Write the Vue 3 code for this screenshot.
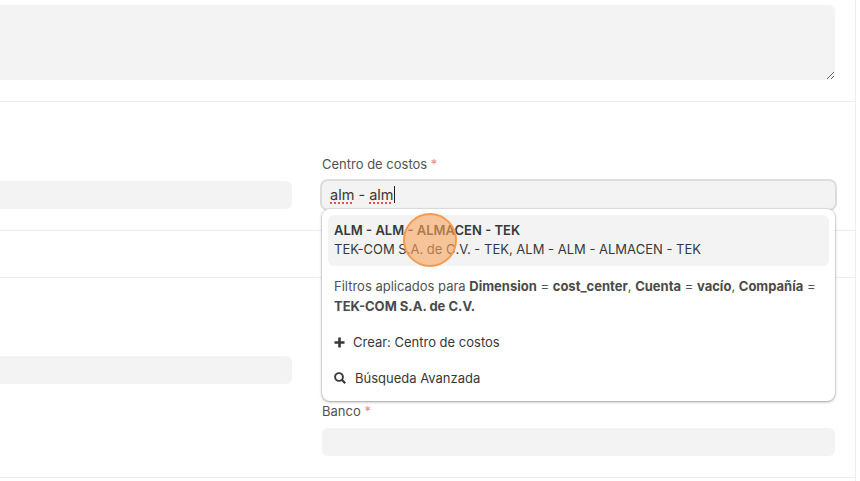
<template>
  <div class="page">
    <section class="sec sec-top">
      <div class="cols">
        <div class="col wide">
          <textarea class="area"></textarea>
        </div>
      </div>
    </section>

    <section class="sec sec-cost">
      <div class="cols">
        <div class="col">
          <div class="box"></div>
        </div>
        <div class="col">
          <label class="lbl">Centro de costos <span class="req">*</span></label>
          <div class="box focus">
            <span class="typed">alm</span> - <span class="typed">alm</span><i class="caret"></i>
          </div>

          <div class="drop">
            <div class="opt">
              <strong>ALM - ALM - ALMACEN - TEK</strong>
              <span>TEK-COM S.A. de C.V. - TEK, ALM - ALM - ALMACEN - TEK</span>
            </div>
            <p class="filters">
              Filtros aplicados para <b>Dimension</b> = <b>cost_center</b>, <b>Cuenta</b> = <b>vacío</b>, <b>Compañía</b> = <b>TEK-COM S.A. de C.V.</b>
            </p>
            <div class="act act-new">
              <svg width="11" height="11" viewBox="0 0 11 11"><path d="M5.5 .5v10M.5 5.5h10" stroke="#383838" stroke-width="2.6" fill="none"/></svg>
              Crear: Centro de costos
            </div>
            <div class="act act-find">
              <svg width="12" height="12" viewBox="0 0 12 12"><circle cx="5" cy="5" r="3.9" stroke="#383838" stroke-width="1.9" fill="none"/><path d="M7.8 7.8l3.4 3.4" stroke="#383838" stroke-width="2.2" fill="none"/></svg>
              Búsqueda Avanzada
            </div>
          </div>
          <div class="pulse"></div>
        </div>
      </div>
    </section>

    <section class="sec sec-empty"></section>

    <section class="sec sec-bank">
      <div class="cols">
        <div class="col">
          <div class="box"></div>
        </div>
        <div class="col">
          <label class="lbl bank-lbl">Banco <span class="req">*</span></label>
          <div class="box"></div>
        </div>
      </div>
    </section>
  </div>
</template>

<script setup>
</script>

<style>
html, body {
  background: #fff;
  overflow: hidden;
}
</style>

<style scoped>
.page {
  width: 856px;
  height: 481px;
  box-sizing: border-box;
  border-right: 1px solid #ededed;
  overflow: hidden;
  font-family: Inter, "Liberation Sans", sans-serif;
  font-size: 13px;
  color: #383838;
}

.sec {
  box-sizing: border-box;
  border-bottom: 1px solid #ededed;
}

.sec-top {
  height: 102px;
  padding-top: 5px;
}

.sec-cost {
  height: 129px;
  padding-top: 79px;
}

.sec-empty {
  height: 47px;
}

.sec-bank {
  height: 200px;
  padding-top: 78px;
}

.cols {
  display: flex;
  justify-content: flex-end;
  gap: 30px;
  padding-right: 20px;
}

.col {
  position: relative;
  flex: none;
  width: 513px;
}

.col.wide {
  width: 1056px;
}

.area {
  display: block;
  box-sizing: border-box;
  width: 100%;
  height: 75px;
  border: none;
  border-radius: 6px;
  background: #f3f3f3;
  margin: 0;
  padding: 0;
  outline: none;
}

.lbl {
  display: block;
  height: 16px;
  margin-top: -25px;
  margin-bottom: 9px;
  line-height: 16px;
  color: #525252;
}

.req {
  color: #e58a8a;
}

.box {
  box-sizing: border-box;
  height: 28px;
  border-radius: 6px;
  background: #f3f3f3;
}

.box.focus {
  padding-left: 8px;
  line-height: 28px;
  font-size: 14.5px;
  color: #383838;
  box-shadow: 0 0 0 2px #dcdcdc;
}

.typed {
  text-decoration: underline dotted #d9534f 2px;
  text-underline-offset: 2px;
}

.caret {
  display: inline-block;
  width: 1px;
  height: 17px;
  background: #222;
  vertical-align: -3px;
}

.bank-lbl {
  margin-top: 47px;
}

.drop {
  position: absolute;
  top: 28px;
  left: 0;
  right: 0;
  height: 192px;
  box-sizing: border-box;
  padding: 6px 6px 0;
  background: #fff;
  border-radius: 8px;
  box-shadow: 0 0 0 1px rgba(0, 0, 0, 0.06), 0 1px 3px rgba(0, 0, 0, 0.35);
  z-index: 2;
}

.opt {
  display: flex;
  flex-direction: column;
  justify-content: center;
  height: 51px;
  padding: 0 6px 2px;
  box-sizing: border-box;
  border-radius: 6px;
  background: #f3f3f3;
  line-height: 19px;
}

.opt strong {
  font-weight: 600;
}

.filters {
  margin: 10px 6px 0;
  line-height: 20px;
  color: #525252;
}

.filters b {
  font-weight: 700;
  color: #4a4a4a;
}

.act {
  display: flex;
  align-items: center;
  padding-left: 6px;
  line-height: 16px;
}

.act-new {
  margin-top: 18px;
  gap: 8px;
}

.act-find {
  margin-top: 20px;
  gap: 9px;
}

.pulse {
  position: absolute;
  left: 81px;
  top: 32px;
  width: 54px;
  height: 54px;
  box-sizing: border-box;
  border-radius: 50%;
  border: 2px solid #f59a50;
  background: rgba(250, 165, 95, 0.6);
  z-index: 3;
}
</style>
